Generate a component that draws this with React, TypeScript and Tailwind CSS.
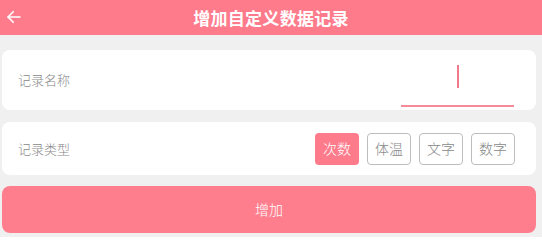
import { useState } from "react";

export default function App() {
    const [type, setType] = useState("次数");
    const types = ["次数", "体温", "文字", "数字"];

    return (
        <div className="w-[542px] h-[237px] bg-[#f0f0f0] overflow-hidden" style={{ fontFamily: '"Noto Sans CJK SC", "Noto Sans", sans-serif' }}>
            {/* Header */}
            <div className="relative h-[35px] bg-[#fe7b8c] flex items-center justify-center">
                <button className="absolute left-[5px] top-[8px] text-white">
                    <svg width="18" height="18" viewBox="0 0 24 24" fill="none" stroke="currentColor" strokeWidth="2.2" strokeLinecap="round" strokeLinejoin="round">
                        <path d="M20 12H4" />
                        <path d="M11 5l-7 7 7 7" />
                    </svg>
                </button>
                <h1 className="text-white text-[17px] font-bold leading-none tracking-[0.3px]">增加自定义数据记录</h1>
            </div>

            <div className="ml-[2px] mr-[6px] pt-[15px] flex flex-col">
                {/* Name */}
                <div className="h-[60px] bg-white rounded-[8px] flex items-center justify-between pl-[16px] pr-[22px]">
                    <span className="text-[13px] font-light text-[#888]">记录名称</span>
                    <div className="w-[113px] h-[52px] mt-[2px] border-b-[2px] border-[#f58a98] flex items-center justify-center">
                        <div className="w-[2px] h-[23px] bg-[#f07a8a] mt-[-8px]" />
                    </div>
                </div>

                {/* Type */}
                <div className="mt-[12px] h-[53px] bg-white rounded-[8px] flex items-center justify-between pl-[16px] pr-[21px]">
                    <span className="text-[13px] font-light text-[#888]">记录类型</span>
                    <div className="flex gap-[8px]">
                        {types.map(t => (
                            <button key={t} onClick={() => setType(t)}
                                className={`w-[44px] h-[32px] rounded-[4px] text-[14px] font-light flex items-center justify-center ${type === t ? "bg-[#fe7b8c] text-white" : "border border-[#bdbdbd] text-[#888]"}`}>
                                {t}
                            </button>
                        ))}
                    </div>
                </div>

                {/* Submit */}
                <button className="mt-[11px] h-[47px] bg-[#fe7e8e] rounded-[8px] text-white text-[14px] font-light flex items-center justify-center">
                    增加
                </button>
            </div>
        </div>
    );
}
